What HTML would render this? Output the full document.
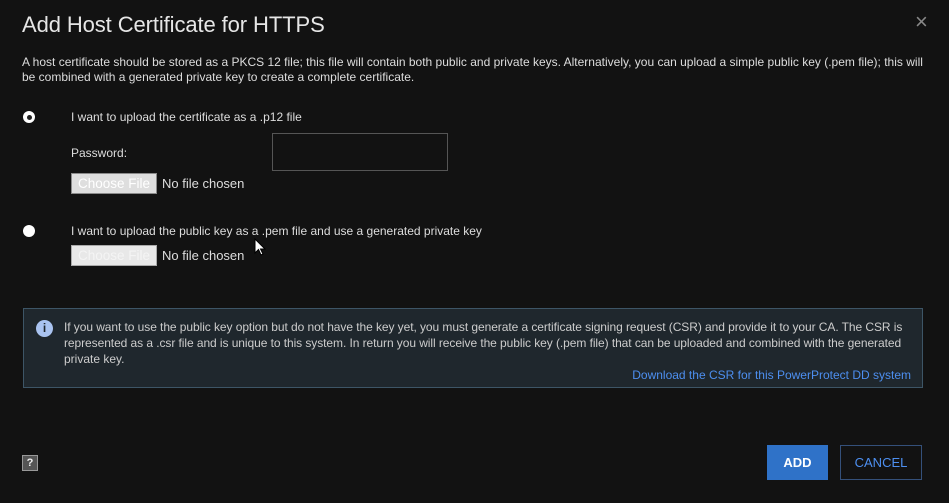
<!DOCTYPE html>
<html><head><style>
*{margin:0;padding:0;box-sizing:border-box}
body{width:949px;height:503px;background:#121212;color:#ddd;font-family:"Liberation Sans",Arial,sans-serif;position:relative;overflow:hidden}
.a{position:absolute;white-space:nowrap}
.t{font-size:12px;letter-spacing:0;color:#ddd}
.btnf{position:absolute;left:71px;width:86px;height:21px;background:#dedede;border:1px solid #8a8a8a;color:#fff;font-size:13.5px;text-align:center;line-height:19px}
.radio{position:absolute;width:12px;height:12px;border-radius:50%;background:#fff}
</style></head><body>
<div class="a" style="left:22px;top:12px;font-size:22px;color:#e6e6e6;letter-spacing:-0.1px">Add Host Certificate for HTTPS</div>
<div class="a" style="left:915px;top:9px;font-size:22px;color:#888">×</div>
<div class="a t" style="left:22px;top:55px">A host certificate should be stored as a PKCS 12 file; this file will contain both public and private keys. Alternatively, you can upload a simple public key (.pem file); this will</div>
<div class="a t" style="left:22px;top:70px">be combined with a generated private key to create a complete certificate.</div>

<div class="radio" style="left:23px;top:111px"><div style="position:absolute;left:3.5px;top:3.5px;width:5px;height:5px;border-radius:50%;background:#222"></div></div>
<div class="a t" style="left:71px;top:110px">I want to upload the certificate as a .p12 file</div>
<div class="a t" style="left:71px;top:146px">Password:</div>
<div class="a" style="left:272px;top:133px;width:176px;height:38px;border:1px solid #555"></div>
<div class="btnf" style="top:173px">Choose File</div>
<div class="a" style="left:162px;top:176px;font-size:13px;color:#ddd">No file chosen</div>

<div class="radio" style="left:23px;top:225px"></div>
<div class="a t" style="left:71px;top:224px">I want to upload the public key as a .pem file and use a generated private key</div>
<div class="btnf" style="top:245px;background:#e8e8e8;border-color:#aaa;color:#f4f4f4">Choose File</div>
<div class="a" style="left:162px;top:248px;font-size:13px;color:#ddd">No file chosen</div>
<svg class="a" style="left:254px;top:238px" width="12" height="20" viewBox="0 0 12 20"><path d="M1 1 L1 15 L4.5 11.5 L7 17 L9 16 L6.5 11 L11 11 Z" fill="#fff" stroke="#000" stroke-width="1"/></svg>

<div class="a" style="left:23px;top:308px;width:900px;height:80px;background:#1f272d;border:1px solid #3d5566"></div>
<div class="a" style="left:36px;top:320px;width:17px;height:17px;border-radius:50%;background:#a9c3f0;color:#1f272d;font-size:12px;font-weight:bold;text-align:center;line-height:17px">i</div>
<div class="a t" style="left:64px;top:320px;color:#ccc;letter-spacing:-0.07px">If you want to use the public key option but do not have the key yet, you must generate a certificate signing request (CSR) and provide it to your CA. The CSR is</div>
<div class="a t" style="left:64px;top:336px;color:#ccc;letter-spacing:-0.07px">represented as a .csr file and is unique to this system. In return you will receive the public key (.pem file) that can be uploaded and combined with the generated</div>
<div class="a t" style="left:64px;top:352px;color:#ccc">private key.</div>
<div class="a t" style="right:38px;top:368px;color:#4d8ff0">Download the CSR for this PowerProtect DD system</div>

<div class="a" style="left:22px;top:455px;width:16px;height:16px;background:#555;border:1px solid #999;color:#eee;font-size:11px;font-weight:bold;text-align:center;line-height:14px">?</div>
<div class="a" style="left:767px;top:445px;width:61px;height:35px;background:#2f72c8;color:#fff;font-size:13px;font-weight:bold;text-align:center;line-height:35px">ADD</div>
<div class="a" style="left:840px;top:445px;width:82px;height:35px;border:1px solid #34507a;color:#4d8ff0;font-size:13px;text-align:center;line-height:33px">CANCEL</div>
</body></html>
